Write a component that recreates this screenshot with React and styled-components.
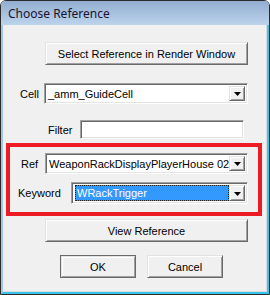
import React from "react";
import styled, { createGlobalStyle, css } from "styled-components";

const GlobalStyle = createGlobalStyle`
  body {
    margin: 0;
    background: #ffffff;
    font-family: "Liberation Sans", Arial, sans-serif;
  }
`;

const App = () => {
  return (
    <>
      <GlobalStyle />
      <Window>
        <Frame>
          <TitleBar>Choose Reference</TitleBar>
          <Body>
            <WideButton $top={17}>Select Reference in Render Window</WideButton>
            <FieldRow $top={18} $pad={17}>
              <Label $width={24}>Cell</Label>
              <Combo value="_amm_GuideCell" width={204} height={21} />
            </FieldRow>
            <FieldRow $top={16} $pad={45}>
              <Label $width={32}>Filter</Label>
              <TextInput />
            </FieldRow>
            <RedFrame>
              <FieldRow $pad={11}>
                <Label $width={24}>Ref</Label>
                <Combo
                  value="WeaponRackDisplayPlayerHouse 02000000"
                  width={203}
                  height={21}
                />
              </FieldRow>
              <FieldRow $top={8} $pad={8}>
                <Label $width={53}>Keyword</Label>
                <Combo value="WRackTrigger" width={177} height={22} selected />
              </FieldRow>
            </RedFrame>
            <WideButton $top={3}>View Reference</WideButton>
            <ButtonRow>
              <SmallButton $default>OK</SmallButton>
              <SmallButton>Cancel</SmallButton>
            </ButtonRow>
          </Body>
        </Frame>
      </Window>
    </>
  );
};

const Combo = ({ value, width, height, selected }) => (
  <ComboBox style={{ width, height }}>
    <ComboText>
      {selected ? <Selection>{value}</Selection> : value}
    </ComboText>
    <DropButton>
      <svg width="7" height="4" viewBox="0 0 7 4">
        <polygon points="0,0 7,0 3.5,4" fill="#000" />
      </svg>
    </DropButton>
  </ComboBox>
);

export default App;

const Window = styled.div`
  width: 270px;
  height: 295px;
  box-sizing: border-box;
  border: 1px solid #2b2b2b;
  border-radius: 6px 6px 0 0;
  overflow: hidden;
  display: flex;
`;

const Frame = styled.div`
  flex: 1;
  display: flex;
  flex-direction: column;
  border-left: 2px solid #a6c4e6;
  border-right: 2px solid #3ac4ea;
  border-bottom: 2px solid #3ac4ea;
  background: #a6c4e6;
`;

const TitleBar = styled.div`
  height: 24px;
  flex-shrink: 0;
  display: flex;
  align-items: center;
  padding-left: 5px;
  margin: 0 -2px 0 -2px;
  padding-left: 7px;
  background: linear-gradient(#92aed0, #bcd3ec);
  font-family: "Noto Sans", "Liberation Sans", sans-serif;
  font-size: 12px;
  color: #1a1430;
`;

const Body = styled.div`
  flex: 1;
  display: flex;
  flex-direction: column;
  background: #f0f0f0;
  font-size: 11px;
  color: #000;
  box-shadow: inset -1px -1px 0 #dcdcdc;
`;

const raised = css`
  box-sizing: border-box;
  background: #f0f0f0;
  border: 1px solid;
  border-color: #e3e3e3 #696969 #696969 #e3e3e3;
  box-shadow: inset 1px 1px 0 #ffffff, inset -1px -1px 0 #a0a0a0;
`;

const sunken = css`
  box-sizing: border-box;
  background: #ffffff;
  border: 1px solid;
  border-color: #a0a0a0 #ffffff #ffffff #a0a0a0;
  box-shadow: inset 1px 1px 0 #696969, inset -1px -1px 0 #e3e3e3;
`;

const WideButton = styled.div`
  ${raised};
  margin: ${({ $top }) => $top}px 0 0 42px;
  width: 203px;
  height: 23px;
  display: flex;
  align-items: center;
  justify-content: center;
`;

const FieldRow = styled.div`
  display: flex;
  align-items: center;
  margin-top: ${({ $top }) => $top || 0}px;
  padding-left: ${({ $pad }) => $pad}px;
`;

const Label = styled.span`
  width: ${({ $width }) => $width}px;
  flex-shrink: 0;
`;

const ComboBox = styled.div`
  ${sunken};
  display: flex;
  align-items: stretch;
  padding: 2px;
`;

const ComboText = styled.div`
  flex: 1;
  min-width: 0;
  overflow: hidden;
  white-space: nowrap;
  display: flex;
  align-items: center;
  padding-left: 1px;
`;

const Selection = styled.span`
  display: flex;
  align-items: center;
  width: 100%;
  height: 100%;
  box-sizing: border-box;
  background: #3399ff;
  color: #ffffff;
  border: 1px dotted #222;
  padding-left: 1px;
`;

const DropButton = styled.div`
  ${raised};
  width: 16px;
  flex-shrink: 0;
  display: flex;
  align-items: center;
  justify-content: center;
  padding-top: 1px;
`;

const TextInput = styled.div`
  ${sunken};
  width: 164px;
  height: 19px;
`;

const RedFrame = styled.div`
  margin: 4px 0 0 3px;
  width: 256px;
  box-sizing: border-box;
  border: 4px solid #ed1c24;
  padding: 6px 0 8px 0;
`;

const ButtonRow = styled.div`
  display: flex;
  gap: 11px;
  margin: 13px 0 0 57px;
`;

const SmallButton = styled.div`
  ${raised};
  width: 76px;
  height: 23px;
  display: flex;
  align-items: center;
  justify-content: center;
  ${({ $default }) =>
    $default &&
    css`
      border-color: #696969;
      box-shadow: inset 1px 1px 0 #e3e3e3, inset -1px -1px 0 #a0a0a0,
        inset 2px 2px 0 #ffffff;
    `}
`;
